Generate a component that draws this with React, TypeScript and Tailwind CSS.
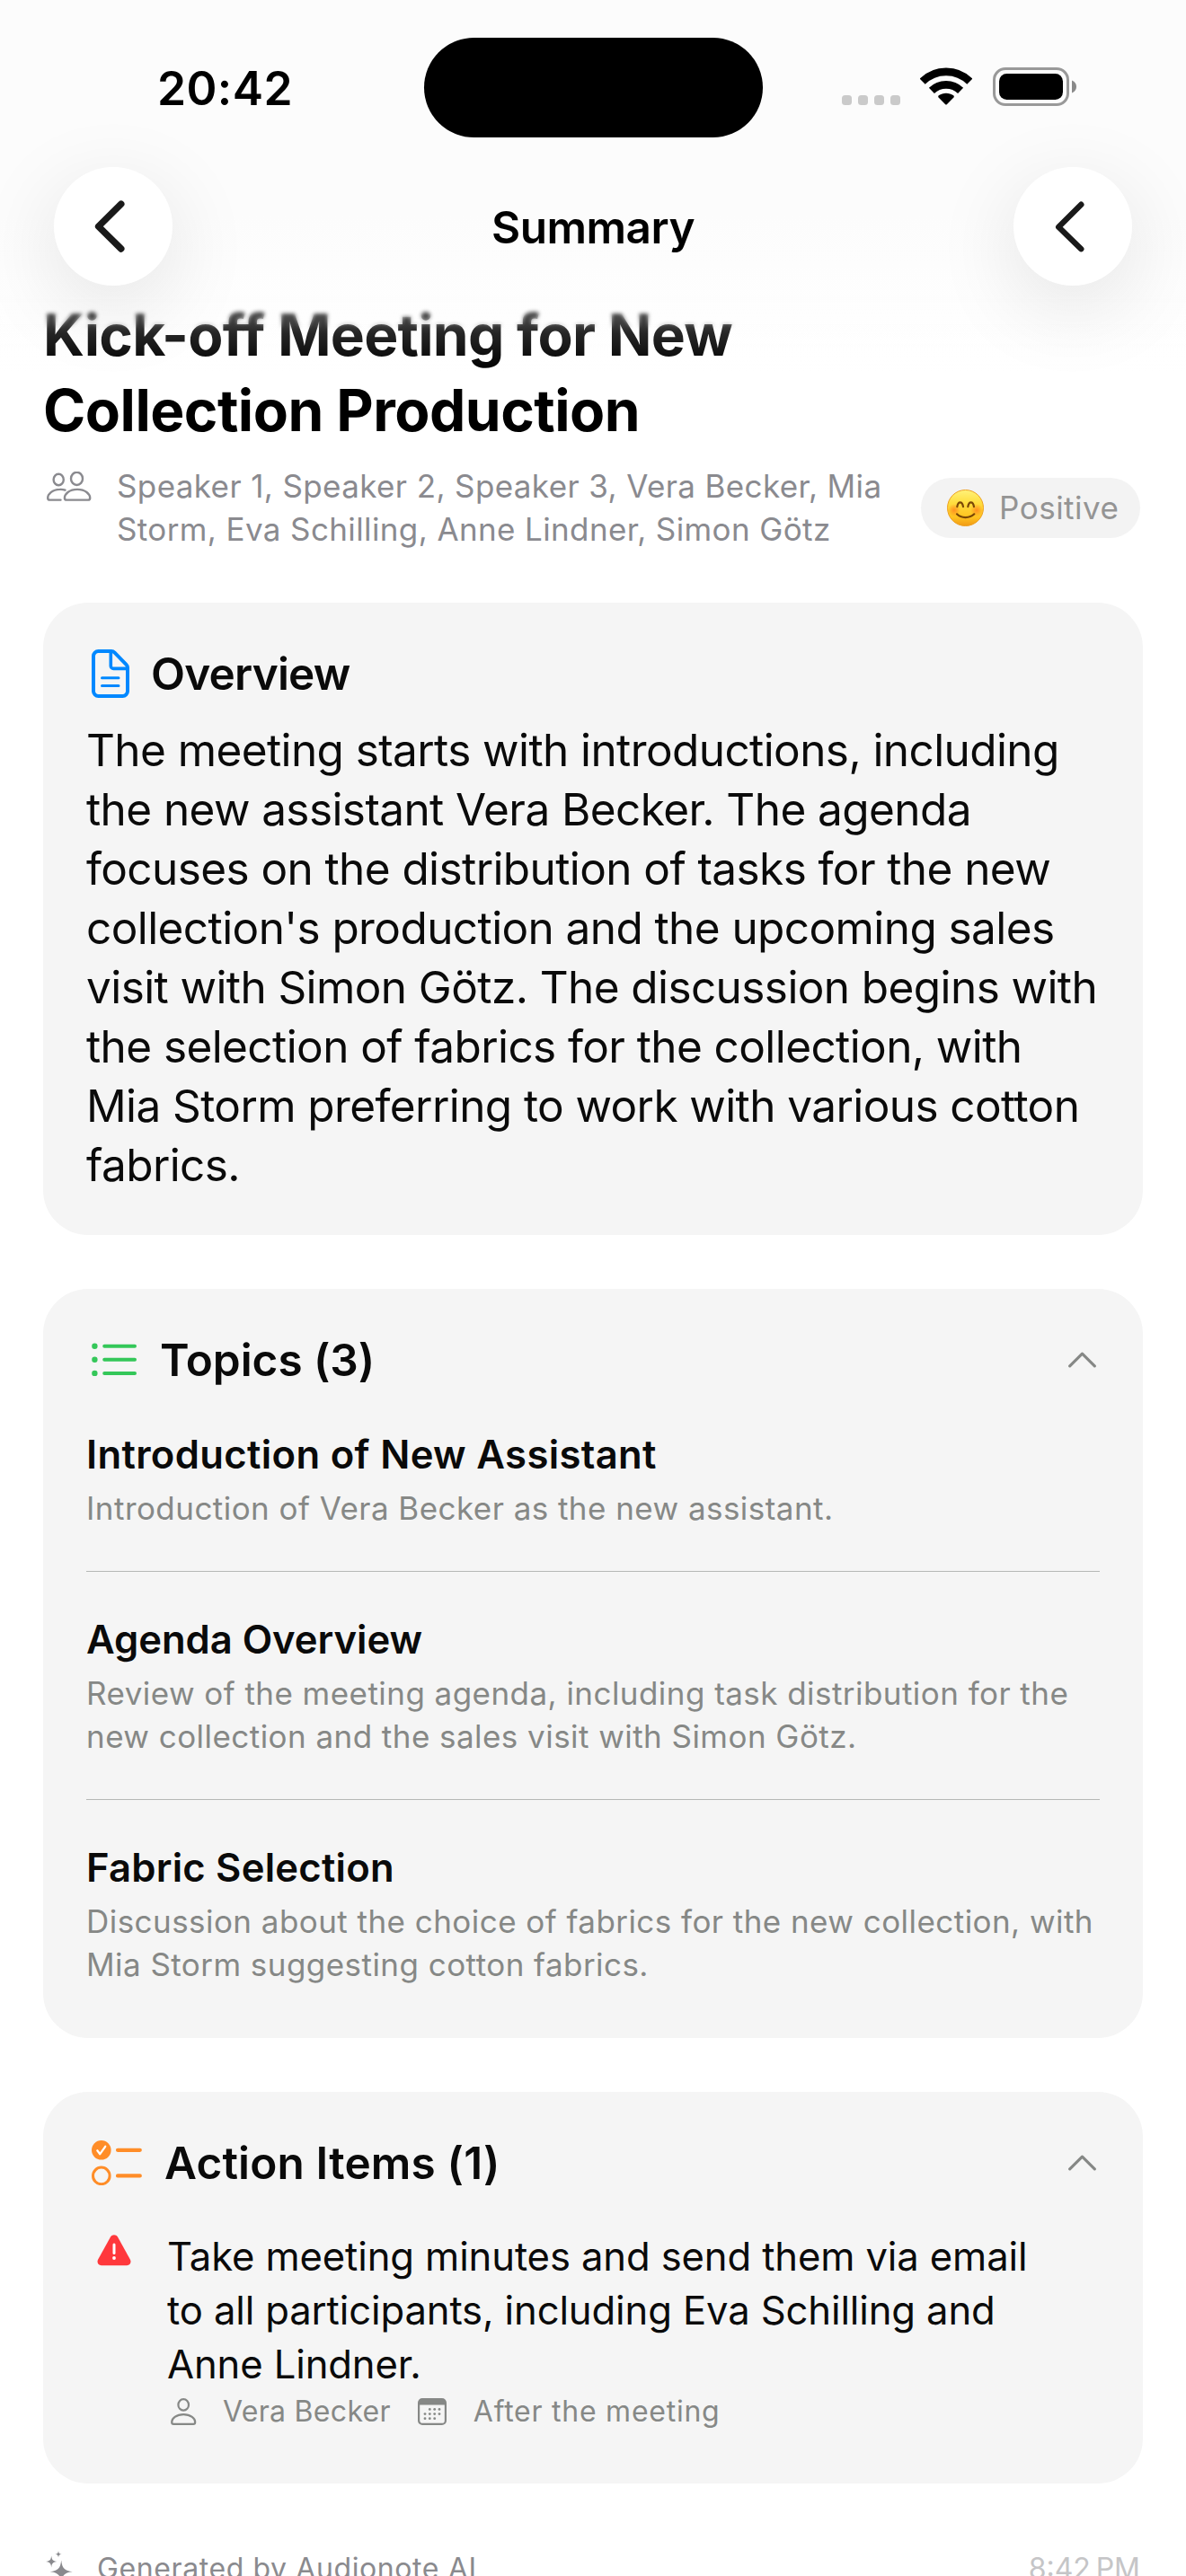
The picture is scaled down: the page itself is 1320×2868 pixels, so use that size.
import type { ReactNode } from "react";

const topics = [
  {
    title: "Introduction of New Assistant",
    description: "Introduction of Vera Becker as the new assistant.",
    tracking: "tracking-[0.34px]",
  },
  {
    title: "Agenda Overview",
    description:
      "Review of the meeting agenda, including task distribution for the new collection and the sales visit with Simon Götz.",
    tracking: "tracking-[-0.05px]",
  },
  {
    title: "Fabric Selection",
    description:
      "Discussion about the choice of fabrics for the new collection, with Mia Storm suggesting cotton fabrics.",
    tracking: "tracking-[0.22px]",
  },
];

/* Status bar glyphs */
function SignalDots() {
  return (
    <svg width="65" height="44" viewBox="0 0 65 44" fill="#cacaca">
      <rect x="0" y="31" width="11" height="11" rx="3.5" />
      <rect x="18" y="31" width="11" height="11" rx="3.5" />
      <rect x="36" y="31" width="11" height="11" rx="3.5" />
      <rect x="54" y="31" width="11" height="11" rx="3.5" />
    </svg>
  );
}

function WifiIcon() {
  return (
    <svg width="58" height="44" viewBox="0 0 58 44" fill="none" stroke="#000" strokeWidth="8.6">
      <path d="M2.7 15.7A37.4 37.4 0 0 1 55.3 15.7" />
      <path d="M12.9 25.9A23 23 0 0 1 45.1 25.9" />
      <path
        d="M28.2 41.2L20.6 33.4C20 32.7 20 31.9 20.8 31.3C25.5 27.9 32.5 27.9 37.2 31.3C38 31.9 38 32.7 37.4 33.4L29.8 41.2C29.3 41.7 28.7 41.7 28.2 41.2Z"
        fill="#000"
        stroke="none"
      />
    </svg>
  );
}

function BatteryIcon() {
  return (
    <svg width="94" height="44" viewBox="0 0 94 44">
      <rect x="1.5" y="1.5" width="82" height="40" rx="12.5" fill="none" stroke="#999" strokeWidth="3" />
      <rect x="7" y="7" width="71" height="29" rx="8.5" fill="#000" />
      <path d="M88 14.5C91.5 16 93 18.5 93 21.5S91.5 27 88 28.5Z" fill="#8a8a8a" />
    </svg>
  );
}

/* Content glyphs */
function PeopleIcon() {
  return (
    <svg className="mt-2 ml-[3px] shrink-0" width="51" height="34" viewBox="0 0 51 34" fill="none" stroke="#8a8a8f" strokeWidth="2.4" strokeLinecap="round" strokeLinejoin="round">
      <ellipse cx="14.2" cy="9" rx="5.6" ry="6.2" />
      <ellipse cx="34.5" cy="7.9" rx="6.5" ry="7.1" />
      <path d="M20.9 29.4C20.9 25 26 19.9 35 19.9S49.2 25 49.2 29.4C49.2 31 48.5 31.6 47 31.6H23.1C21.6 31.6 20.9 31 20.9 29.4Z" />
      <path d="M21.5 20.7C19.6 20 17.6 19.8 15.6 19.9C7 20.1 2.2 25.3 2.2 29.4C2.2 31 2.9 31.6 4.4 31.6H16.5" />
    </svg>
  );
}

function SmileEmoji() {
  return (
    <svg width="41" height="41" viewBox="0 0 41 41" fill="none">
      <defs>
        <linearGradient id="face" x1="0" y1="0" x2="0" y2="1">
          <stop offset="0" stopColor="#fff27a" />
          <stop offset="0.35" stopColor="#ffde40" />
          <stop offset="0.75" stopColor="#ffc320" />
          <stop offset="1" stopColor="#f09a16" />
        </linearGradient>
        <radialGradient id="cheek">
          <stop offset="0" stopColor="#ff7a1a" stopOpacity="0.75" />
          <stop offset="1" stopColor="#ff7a1a" stopOpacity="0" />
        </radialGradient>
      </defs>
      <circle cx="20.5" cy="20.5" r="20" fill="url(#face)" stroke="#eda022" strokeWidth="1" />
      <circle cx="8" cy="23" r="7" fill="url(#cheek)" />
      <circle cx="33" cy="23" r="7" fill="url(#cheek)" />
      <path d="M11.3 19.2C12.3 12.8 17 12.8 18 19.2M23.3 19.2C24.3 12.8 29 12.8 30 19.2" stroke="#7a4706" strokeWidth="2.2" strokeLinecap="round" />
      <path d="M11 27.3C15.5 32.3 25.5 32.3 30.3 27.3" stroke="#7a4706" strokeWidth="2.2" strokeLinecap="round" />
    </svg>
  );
}

function DocIcon() {
  return (
    <svg width="42" height="54" viewBox="0 0 42 54" fill="none" stroke="#0088ff" strokeWidth="4" strokeLinecap="round" strokeLinejoin="round">
      <path d="M22 2H7.5A5.5 5.5 0 0 0 2 7.5V46.5A5.5 5.5 0 0 0 7.5 52H34.5A5.5 5.5 0 0 0 40 46.5V20.5C40 18.9 39.6 17.9 38.5 16.8L25.6 3.6C24.5 2.5 23.5 2 22 2Z" />
      <path d="M21.3 3V18.4A3 3 0 0 0 24.3 21.4H39" strokeWidth="3.6" />
      <path d="M11.5 31.7H30M11.5 40.5H30" strokeWidth="3" />
    </svg>
  );
}

function ListIcon() {
  return (
    <svg width="51" height="38" viewBox="0 0 51 38" fill="#34c759" stroke="#34c759" strokeWidth="4" strokeLinecap="round">
      <path d="M14.2 3.7H48M14.2 18.8H48M14.2 33.9H48" />
      <g stroke="none">
        <circle cx="3.4" cy="3.7" r="3.2" />
        <circle cx="3.4" cy="18.8" r="3.2" />
        <circle cx="3.4" cy="33.9" r="3.2" />
      </g>
    </svg>
  );
}

function ChecklistIcon() {
  return (
    <svg width="56" height="50" viewBox="0 0 56 50" fill="none" stroke="#ff8d28" strokeLinecap="round" strokeLinejoin="round">
      <circle cx="10.8" cy="10.8" r="10.8" fill="#ff8d28" stroke="none" />
      <path d="M6.3 11.3L9.3 15.2L15.2 6.8" stroke="#fff" strokeWidth="2.3" />
      <circle cx="10.8" cy="39.4" r="9.3" strokeWidth="3" />
      <path d="M29 10.8H53.8M29 39.4H53.8" strokeWidth="4.2" />
    </svg>
  );
}

function WarningIcon() {
  return (
    <svg className="mt-[5px] shrink-0" width="38" height="35" viewBox="0 0 38 35">
      <path
        d="M15 2.6C16.8 -0.5 21.2 -0.5 23 2.6L36.8 27.4C38.6 30.7 36.8 34.2 33.2 34.2H4.8C1.2 34.2 -0.6 30.7 1.2 27.4Z"
        fill="#ff383c"
      />
      <path d="M19 11V20.5" stroke="#fff" strokeWidth="3" strokeLinecap="round" />
      <circle cx="19" cy="26" r="1.9" fill="#fff" />
    </svg>
  );
}

function PersonIcon() {
  return (
    <svg width="29" height="30" viewBox="0 0 29 30" fill="none" stroke="#868886" strokeWidth="2.2" strokeLinejoin="round">
      <ellipse cx="14.2" cy="7.4" rx="5.8" ry="6.3" />
      <path d="M1.2 26.7C1.2 22.8 6 18.2 14.2 18.2S27.2 22.8 27.2 26.7C27.2 28.3 26.6 28.9 25.2 28.9H3.2C1.8 28.9 1.2 28.3 1.2 26.7Z" />
    </svg>
  );
}

function CalendarIcon() {
  return (
    <svg width="32" height="30" viewBox="0 0 32 30" fill="#868886">
      <rect x="1.1" y="1.1" width="29.8" height="27.8" rx="4" fill="none" stroke="#868886" strokeWidth="2.2" />
      <path d="M1 7.4V5A4 4 0 0 1 5 1H27A4 4 0 0 1 31 5V7.4Z" />
      <circle cx="13.3" cy="12.4" r="1.4" />
      <circle cx="18.7" cy="12.4" r="1.4" />
      <circle cx="24" cy="12.4" r="1.4" />
      <circle cx="8" cy="17.6" r="1.4" />
      <circle cx="13.3" cy="17.6" r="1.4" />
      <circle cx="18.7" cy="17.6" r="1.4" />
      <circle cx="24" cy="17.6" r="1.4" />
      <circle cx="8" cy="22.7" r="1.4" />
      <circle cx="13.3" cy="22.7" r="1.4" />
      <circle cx="18.7" cy="22.7" r="1.4" />
    </svg>
  );
}

function SparklesIcon() {
  return (
    <svg width="30" height="36" viewBox="0 0 30 36" fill="#8a8a8e">
      <path d="M17.2 10.5C18.2 19.5 20.8 22.2 29.7 23.2C20.8 24.2 18.2 26.9 17.2 35.9C16.2 26.9 13.6 24.2 4.7 23.2C13.6 22.2 16.2 19.5 17.2 10.5Z" />
      <path d="M6.2 5.6C6.7 10.2 8 11.5 12.4 12C8 12.5 6.7 13.8 6.2 18.4C5.7 13.8 4.4 12.5 0 12C4.4 11.5 5.7 10.2 6.2 5.6Z" />
      <path d="M14 0C14.3 2.7 15.1 3.5 17.8 3.8C15.1 4.1 14.3 4.9 14 7.6C13.7 4.9 12.9 4.1 10.2 3.8C12.9 3.5 13.7 2.7 14 0Z" />
    </svg>
  );
}

function ChevronUp() {
  return (
    <svg className="mr-1 ml-auto" width="31" height="18" viewBox="0 0 31 18" fill="none" stroke="#868886" strokeWidth="3.2" strokeLinecap="round" strokeLinejoin="round">
      <path d="M1.7 15.9L15.5 2.2L29.3 15.9" />
    </svg>
  );
}

function RoundButton({ label, children }: { label: string; children: ReactNode }) {
  return (
    <button
      type="button"
      aria-label={label}
      className="flex size-[132px] items-center justify-center rounded-full bg-white shadow-[0_24px_96px_rgba(0,0,0,0.11)]"
    >
      {children}
    </button>
  );
}

function Card({ className, children }: { className: string; children: ReactNode }) {
  return <section className={`rounded-[50px] bg-[#f5f5f5] px-12 pt-12 ${className}`}>{children}</section>;
}

function CardTitle({ icon, className, children }: { icon: ReactNode; className: string; children: ReactNode }) {
  return (
    <div className="flex h-[62px] items-center pl-1.5">
      {icon}
      <h2 className={`text-[49.5px] leading-[62px] font-semibold ${className}`}>{children}</h2>
    </div>
  );
}

export default function App() {
  return (
    <div className="h-[2868px] w-[1320px] overflow-hidden bg-white bg-[linear-gradient(#fcfcfc,#fcfcfc_240px,#fff_400px)] font-[Inter,sans-serif] text-[#0a0a0a]">
      <header className="relative z-10 pt-[42px] pb-[13px] text-black">
        {/* Status bar */}
        <div className="flex h-[110px] items-center">
          <span className="w-[472px] pt-0.5 pl-[175px] text-[51.5px] leading-[60px] font-semibold tracking-[0.4px]">20:42</span>
          <div className="h-[111px] w-[377px] rounded-full bg-black" />
          <div className="flex items-center pl-[88px]">
            <SignalDots />
            <span className="ml-[22px]">
              <WifiIcon />
            </span>
            <span className="ml-[23px]">
              <BatteryIcon />
            </span>
          </div>
        </div>

        {/* Scroll edge effect over the title */}
        <div className="pointer-events-none absolute inset-x-0 top-full h-9 backdrop-blur-[2px] [mask-image:linear-gradient(#000_50%,transparent)]" />
        <div className="pointer-events-none absolute inset-x-0 top-full h-[84px] bg-[linear-gradient(rgba(254,254,254,0.5),rgba(254,254,254,0.3)_20px,rgba(254,254,254,0.15)_40px,rgba(254,254,254,0.06)_65px,rgba(254,254,254,0))]" />

        {/* Navigation bar */}
        <div className="relative mt-[34px] flex h-[132px] items-center justify-between px-[60px]">
          <RoundButton label="Back">
            <svg className="mr-[9px]" width="34" height="58" viewBox="0 0 34 58" fill="none" stroke="#1a1a1a" strokeWidth="7.4" strokeLinecap="round" strokeLinejoin="round">
              <path d="M29.8 4.2L4.6 29.2L29.8 54" />
            </svg>
          </RoundButton>
          <h1 className="pt-[2px] text-[49.5px] leading-[60px] font-semibold tracking-[-0.5px]">Summary</h1>
          <RoundButton label="Previous">
            <svg className="mr-[8px]" width="33" height="58" viewBox="0 0 33 58" fill="none" stroke="#1a1a1a" strokeWidth="6.4" strokeLinecap="round" strokeLinejoin="round">
              <path d="M29.3 4.7L4.2 29.7L29.3 54.2" />
            </svg>
          </RoundButton>
        </div>
      </header>

      <main className="px-12">
        <h2 className="w-[900px] text-[64px] leading-[84px] font-bold text-black">
          <span className="block tracking-[-0.74px]">Kick-off Meeting for New</span>
          <span className="block tracking-[-0.52px]">Collection Production</span>
        </h2>

        {/* Participants and mood */}
        <div className="mt-[18px] flex items-center">
          <div className="flex flex-1 items-start">
            <PeopleIcon />
            <p className="ml-[28px] w-[870px] text-[35px] leading-[48px] tracking-[0.38px] text-[#8a8a8f]">
              Speaker 1, Speaker 2, Speaker 3, Vera Becker, Mia Storm, Eva Schilling, Anne Lindner, Simon Götz
            </p>
          </div>
          <div className="mr-[3px] flex h-[67px] w-[244px] shrink-0 items-center rounded-full bg-[#f3f3f3] pl-[29px]">
            <SmileEmoji />
            <span className="ml-[17px] text-[35px] leading-[48px] tracking-[0.5px] text-[#949494]">Positive</span>
          </div>
        </div>

        <Card className="mt-[58px] pb-[45px]">
          <CardTitle icon={<DocIcon />} className="ml-6 tracking-[-0.8px]">
            Overview
          </CardTitle>
          <p className="mt-[21px] text-[49.5px] leading-[66px] tracking-[-0.59px]">
            The meeting starts with introductions, including the new assistant Vera Becker. The agenda focuses on the
            distribution of tasks for the new collection&apos;s production and the upcoming sales visit with Simon
            Götz. The discussion begins with the selection of fabrics for the collection, with Mia Storm preferring to
            work with various cotton fabrics.
          </p>
        </Card>

        <Card className="mt-[60px] pb-[58px]">
          <div className="flex items-center">
            <CardTitle icon={<ListIcon />} className="ml-[25px] tracking-[-0.05px]">
              Topics (3)
            </CardTitle>
            <ChevronUp />
          </div>
          <ul className="-mt-px divide-y divide-[#b6b8b6]">
            {topics.map((topic) => (
              <li key={topic.title} className="pt-[46px] pb-[46px] last:pb-0">
                <h3 className={`text-[43.6px] leading-[60px] font-semibold ${topic.tracking}`}>{topic.title}</h3>
                <p className="mt-[5px] text-[35px] leading-[48px] tracking-[0.45px] text-[#868886]">{topic.description}</p>
              </li>
            ))}
          </ul>
        </Card>

        <Card className="mt-[60px] pb-[60px]">
          <div className="flex items-center">
            <CardTitle icon={<ChecklistIcon />} className="ml-[25px] tracking-[0.17px]">
              Action Items (1)
            </CardTitle>
            <ChevronUp />
          </div>
          <div className="mt-11 flex items-start pl-3">
            <WarningIcon />
            <div className="ml-10 w-[990px]">
              <p className="text-[43.6px] leading-[60px] tracking-[-0.12px]">
                Take meeting minutes and send them via email to all participants, including Eva Schilling and Anne
                Lindner.
              </p>
              <div className="mt-0.5 flex h-10 items-center pl-1 text-[32px] leading-[40px] text-[#868886]">
                <PersonIcon />
                <span className="ml-[29px] tracking-[0.3px]">Vera Becker</span>
                <span className="ml-[30px]">
                  <CalendarIcon />
                </span>
                <span className="ml-[30px] tracking-[0.75px]">After the meeting</span>
              </div>
            </div>
          </div>
        </Card>

        {/* Runs past the fold */}
        <footer className="mt-[75px] flex items-start pr-[3px] pl-[3px] text-[32px] leading-[40px] text-[#8a8a8e]">
          <SparklesIcon />
          <span className="ml-[27px] tracking-[0.6px]">Generated by Audionote AI</span>
          <span className="ml-auto text-[#c5c5c7]">8:42{"\u202F"}PM</span>
        </footer>
      </main>
    </div>
  );
}
